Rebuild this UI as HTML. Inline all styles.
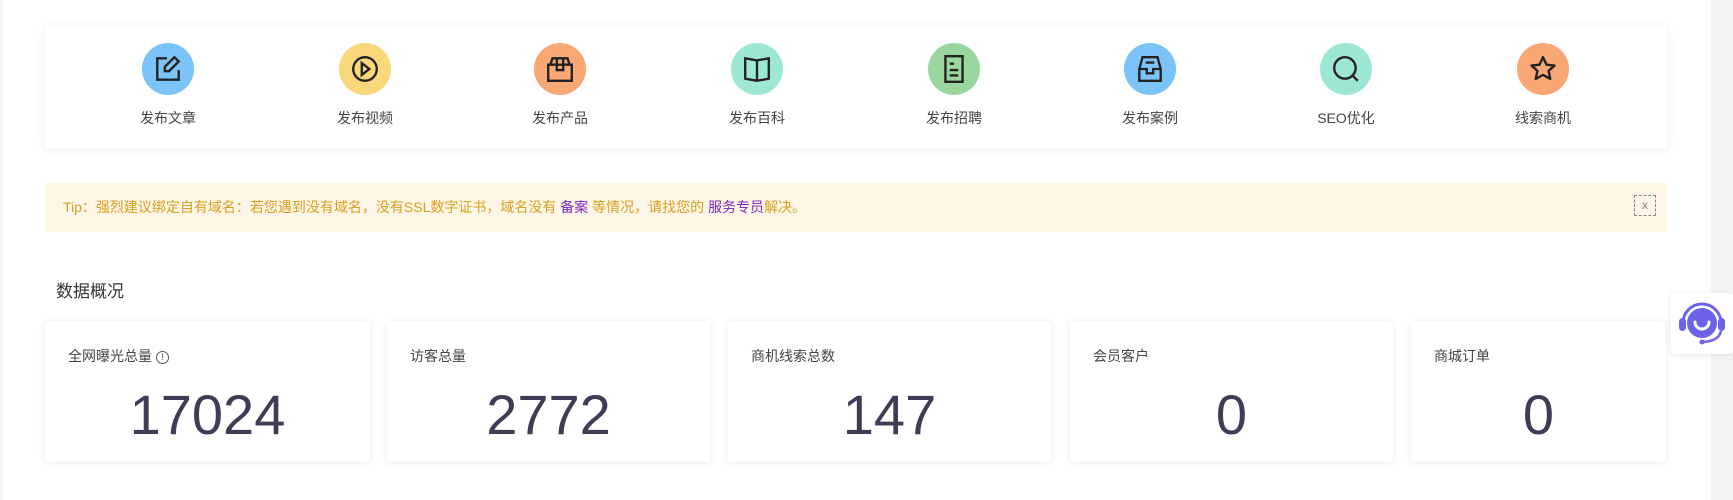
<!DOCTYPE html>
<html><head><meta charset="utf-8"><style>
*{margin:0;padding:0;box-sizing:border-box}
body{width:1733px;height:500px;background:#fff;position:relative;overflow:hidden;font-family:"Liberation Sans","Noto Sans CJK SC",sans-serif;}
.lstrip{position:absolute;left:0;top:0;width:3px;height:500px;background:#f3f3f3}
.rstrip{position:absolute;left:1711px;top:0;width:22px;height:500px;background:#f3f3f3}
.topcard{position:absolute;left:45px;top:25px;width:1622px;height:123px;background:#fff;box-shadow:0 2px 10px rgba(0,0,0,.08)}
.item{position:absolute;top:0;width:120px;margin-left:-60px;text-align:center}
.circ{position:absolute;left:34px;top:18px;width:52px;height:52px;border-radius:50%}
.circ svg{position:absolute;left:11px;top:11px}
.lbl{position:absolute;top:83px;left:0;width:120px;text-align:center;font-size:14px;color:#444}
.tip{position:absolute;left:45px;top:183px;width:1622px;height:49px;background:#fdf5e5;font-size:14px;color:#d9a020;line-height:49px;padding-left:18px}
.tip b{font-weight:normal;color:#7a2bc0}
.x{position:absolute;left:1589px;top:12px;width:22px;height:21px;border:1px dashed #888;color:#888;font-size:12px;line-height:19px;text-align:center}
h3{position:absolute;left:56px;top:277px;font-size:17px;font-weight:normal;color:#333}
.card{position:absolute;top:321px;height:141px;background:#fff;border-radius:3px;box-shadow:0 1px 8px rgba(0,0,0,.09)}
.card .t{position:absolute;left:23px;top:25px;font-size:14px;color:#444}
.card .n{position:absolute;left:0;right:0;top:61px;text-align:center;font-size:56px;color:#3f3d56;line-height:66px}
.svc{position:absolute;left:1671px;top:293px;width:62px;height:61px;background:#fff;border-radius:4px;box-shadow:0 1px 6px rgba(0,0,0,.1)}
</style></head><body>
<div class="lstrip"></div><div class="rstrip"></div>
<div class="topcard">
 <div class="item" style="left:123px"><div class="circ" style="background:#7cc3fa"><svg width="30" height="30" viewBox="0 0 28 28" fill="none" stroke="#222" stroke-width="2.2"><path d="M13 4H4v20h20v-9"/><path d="M20 3l4 4-9 9h-4v-4z"/></svg></div><div class="lbl">发布文章</div></div>
 <div class="item" style="left:320px"><div class="circ" style="background:#f9d87c"><svg width="30" height="30" viewBox="0 0 28 28" fill="none" stroke="#222" stroke-width="2.2"><circle cx="14" cy="14" r="11"/><path d="M11 8.5l7 5.5-7 5.5z"/></svg></div><div class="lbl">发布视频</div></div>
 <div class="item" style="left:515px"><div class="circ" style="background:#f8a775"><svg width="30" height="30" viewBox="0 0 28 28" fill="none" stroke="#222" stroke-width="2.2"><path d="M3 10h22v15H3zM5 10l2-6h14l2 6M11 4v11h6V4"/></svg></div><div class="lbl">发布产品</div></div>
 <div class="item" style="left:712px"><div class="circ" style="background:#9de8d5"><svg width="30" height="30" viewBox="0 0 28 28" fill="none" stroke="#222" stroke-width="2.2"><path d="M3 4l11 2 11-2v19l-11 2-11-2zM14 6v19"/></svg></div><div class="lbl">发布百科</div></div>
 <div class="item" style="left:909px"><div class="circ" style="background:#9ad79e"><svg width="30" height="30" viewBox="0 0 28 28" fill="none" stroke="#222" stroke-width="2.2"><path d="M6 2h16v24H6zM10 9h4M10 15h8M10 20h8"/></svg></div><div class="lbl">发布招聘</div></div>
 <div class="item" style="left:1105px"><div class="circ" style="background:#7cc3fa"><svg width="30" height="30" viewBox="0 0 28 28" fill="none" stroke="#222" stroke-width="2.2"><path d="M7 3h14l3 11v11H4V14zM4 14h7v4h6v-4h7M10 8h8"/></svg></div><div class="lbl">发布案例</div></div>
 <div class="item" style="left:1301px"><div class="circ" style="background:#9de8d5"><svg width="30" height="30" viewBox="0 0 28 28" fill="none" stroke="#222" stroke-width="2.2"><circle cx="13" cy="13" r="10"/><path d="M20 20l5 5"/></svg></div><div class="lbl">SEO优化</div></div>
 <div class="item" style="left:1498px"><div class="circ" style="background:#f8a775"><svg width="30" height="30" viewBox="0 0 28 28" fill="none" stroke="#222" stroke-width="2.2" stroke-linejoin="round"><path d="M14 3l3.3 7 7.4.8-5.5 5 1.6 7.5L14 19.5l-6.8 3.8 1.6-7.5-5.5-5 7.4-.8z"/></svg></div><div class="lbl">线索商机</div></div>
</div>
<div class="tip">Tip：强烈建议绑定自有域名：若您遇到没有域名，没有SSL数字证书，域名没有 <b>备案</b> 等情况，请找您的 <b>服务专员</b>解决。<div class="x">x</div></div>
<h3>数据概况</h3>
<div class="card" style="left:45px;width:325px"><div class="t">全网曝光总量 <span style="display:inline-block;width:13px;height:13px;border:1px solid #555;border-radius:50%;font-size:9px;line-height:11px;text-align:center;vertical-align:1px">!</span></div><div class="n">17024</div></div>
<div class="card" style="left:387px;width:323px"><div class="t">访客总量</div><div class="n">2772</div></div>
<div class="card" style="left:728px;width:323px"><div class="t">商机线索总数</div><div class="n">147</div></div>
<div class="card" style="left:1070px;width:323px"><div class="t">会员客户</div><div class="n">0</div></div>
<div class="card" style="left:1411px;width:255px"><div class="t">商城订单</div><div class="n">0</div></div>
<div class="svc"><svg width="62" height="61" viewBox="0 0 62 61"><path d="M12 30a19 19 0 0 1 38 0" fill="none" stroke="#6c63e8" stroke-width="3"/><circle cx="31" cy="30" r="15" fill="#6c63e8"/><path d="M24 29a7 7 0 0 0 14 0" fill="none" stroke="#fff" stroke-width="3" stroke-linecap="round"/><rect x="8" y="25" width="7" height="13" rx="3.5" fill="#6c63e8"/><rect x="47" y="25" width="7" height="13" rx="3.5" fill="#6c63e8"/><path d="M50 38q-2 10-18 11" fill="none" stroke="#6c63e8" stroke-width="2.5"/><circle cx="31" cy="49" r="2.5" fill="#6c63e8"/></svg></div>
</body></html>
